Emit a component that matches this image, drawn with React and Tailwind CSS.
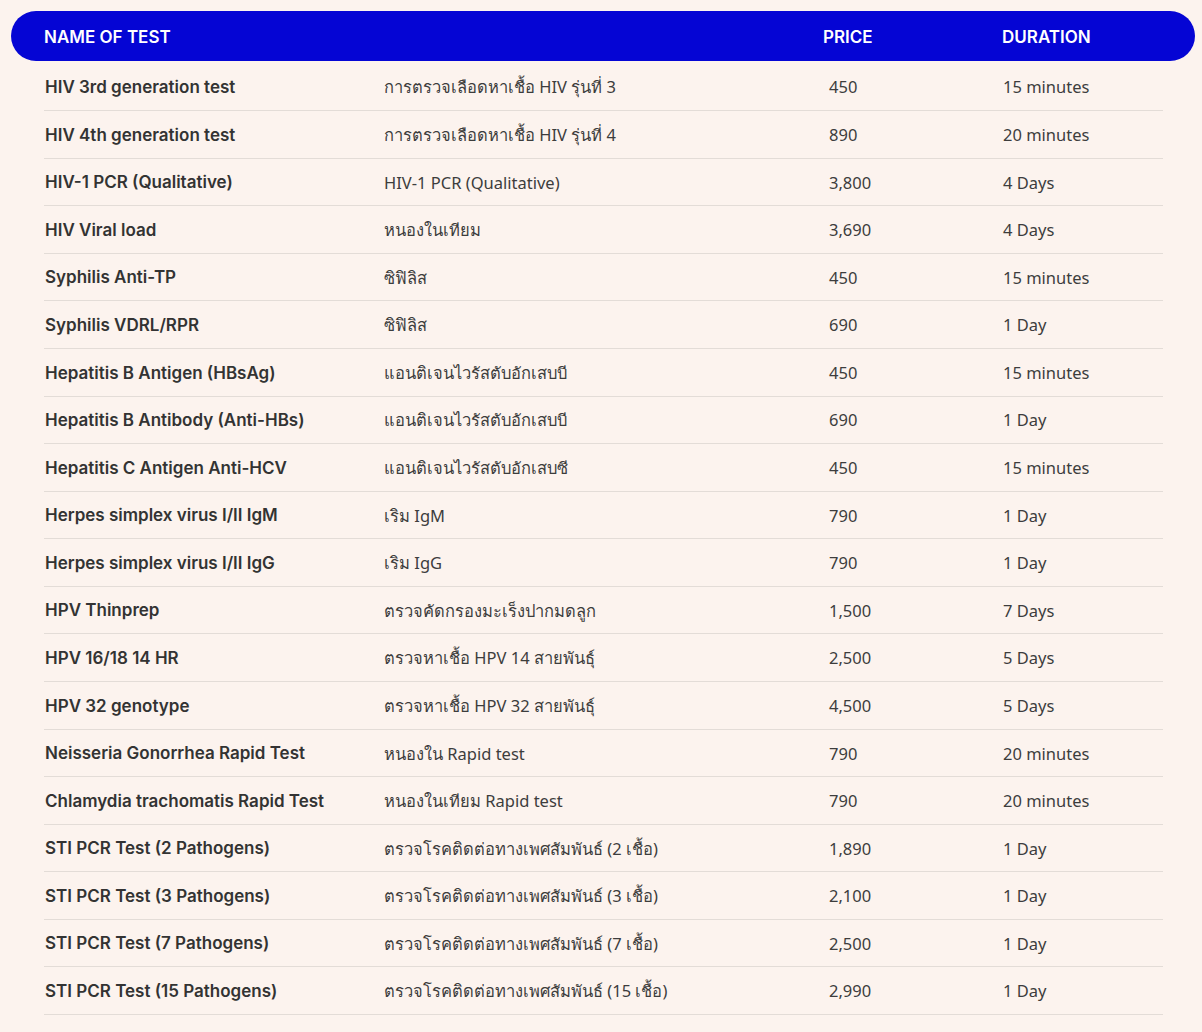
import React from "react";

const rows = [
  ["HIV 3rd generation test", "การตรวจเลือดหาเชื้อ HIV รุ่นที่ 3", "450", "15 minutes"],
  ["HIV 4th generation test", "การตรวจเลือดหาเชื้อ HIV รุ่นที่ 4", "890", "20 minutes"],
  ["HIV-1 PCR (Qualitative)", "HIV-1 PCR (Qualitative)", "3,800", "4 Days"],
  ["HIV Viral load", "หนองในเทียม", "3,690", "4 Days"],
  ["Syphilis Anti-TP", "ซิฟิลิส", "450", "15 minutes"],
  ["Syphilis VDRL/RPR", "ซิฟิลิส", "690", "1 Day"],
  ["Hepatitis B Antigen (HBsAg)", "แอนติเจนไวรัสตับอักเสบบี", "450", "15 minutes"],
  ["Hepatitis B Antibody (Anti-HBs)", "แอนติเจนไวรัสตับอักเสบบี", "690", "1 Day"],
  ["Hepatitis C Antigen Anti-HCV", "แอนติเจนไวรัสตับอักเสบซี", "450", "15 minutes"],
  ["Herpes simplex virus I/II IgM", "เริม IgM", "790", "1 Day"],
  ["Herpes simplex virus I/II IgG", "เริม IgG", "790", "1 Day"],
  ["HPV Thinprep", "ตรวจคัดกรองมะเร็งปากมดลูก", "1,500", "7 Days"],
  ["HPV 16/18 14 HR", "ตรวจหาเชื้อ HPV 14 สายพันธุ์", "2,500", "5 Days"],
  ["HPV 32 genotype", "ตรวจหาเชื้อ HPV 32 สายพันธุ์", "4,500", "5 Days"],
  ["Neisseria Gonorrhea Rapid Test", "หนองใน Rapid test", "790", "20 minutes"],
  ["Chlamydia trachomatis Rapid Test", "หนองในเทียม Rapid test", "790", "20 minutes"],
  ["STI PCR Test (2 Pathogens)", "ตรวจโรคติดต่อทางเพศสัมพันธ์ (2 เชื้อ)", "1,890", "1 Day"],
  ["STI PCR Test (3 Pathogens)", "ตรวจโรคติดต่อทางเพศสัมพันธ์ (3 เชื้อ)", "2,100", "1 Day"],
  ["STI PCR Test (7 Pathogens)", "ตรวจโรคติดต่อทางเพศสัมพันธ์ (7 เชื้อ)", "2,500", "1 Day"],
  ["STI PCR Test (15 Pathogens)", "ตรวจโรคติดต่อทางเพศสัมพันธ์ (15 เชื้อ)", "2,990", "1 Day"],
];

export default function App() {
  return (
    <div className="min-h-[1032px] bg-[#fcf3ee] pt-[11px] pl-[11px] pr-[7px] font-['Inter','Noto_Sans',sans-serif] text-[#333333]">
      {/* Header */}
      <div className="grid h-[50px] grid-cols-[340px_439px_179px_1fr] items-center rounded-full bg-[#0505d4] pl-[33px] pt-[3px] text-[17px] font-semibold text-white">
        <div>NAME OF TEST</div>
        <div></div>
        <div>PRICE</div>
        <div>DURATION</div>
      </div>

      {/* Rows */}
      <div className="ml-[33px] mr-[32px] mt-[2.5px]">
        {rows.map((r) => (
          <div
            key={r[0]}
            className="grid h-[47.58px] grid-cols-[340px_439px_179px_1fr] items-center border-b border-[#e3dcd7] pt-[2px] text-[16.5px]"
          >
            <div className="pl-px text-[17px] font-semibold">{r[0]}</div>
            <div className="font-['Noto_Sans',sans-serif] text-[#3d3d3d]">{r[1]}</div>
            <div className="pl-[6px] font-['Noto_Sans',sans-serif] text-[#3d3d3d]">{r[2]}</div>
            <div className="pl-px font-['Noto_Sans',sans-serif] text-[#3d3d3d]">{r[3]}</div>
          </div>
        ))}
      </div>
    </div>
  );
}
